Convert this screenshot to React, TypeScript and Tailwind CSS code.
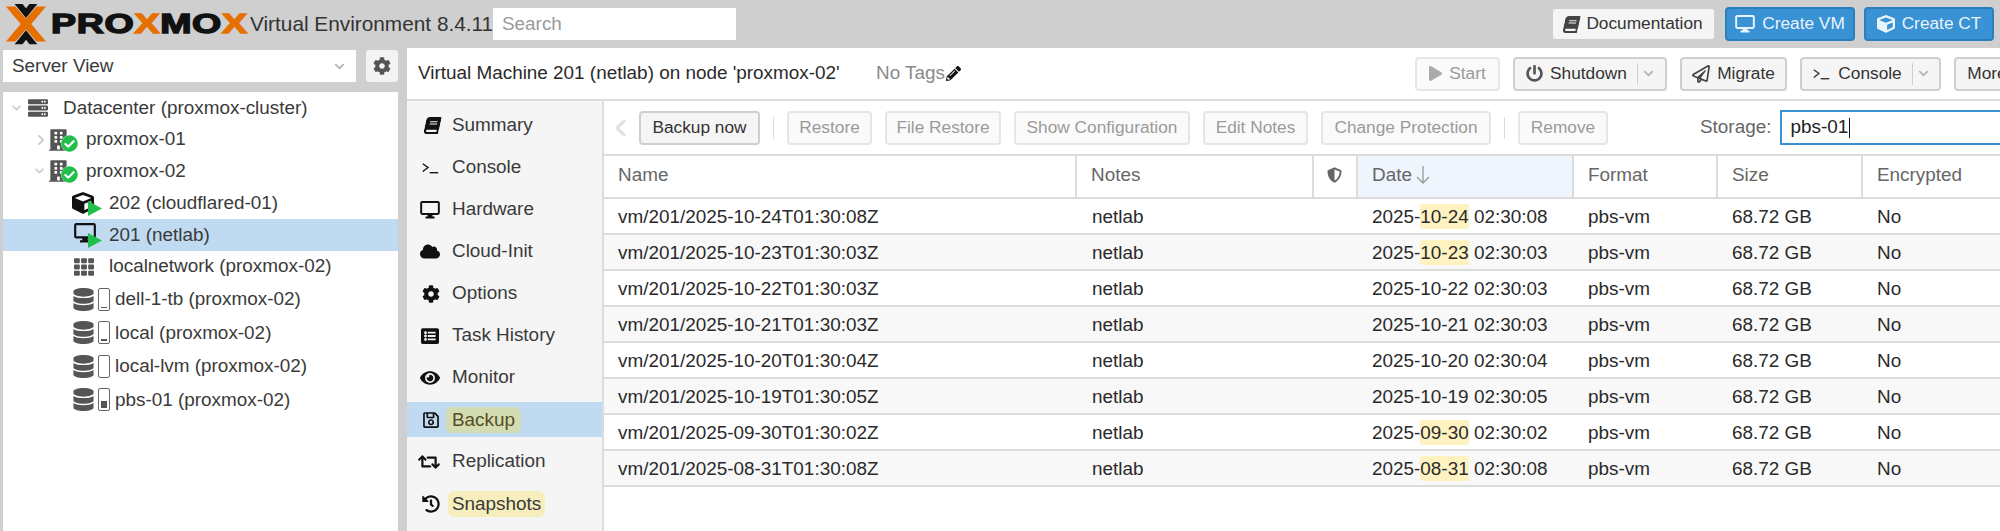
import type { ReactNode } from 'react';
import {
  FaBook,
  FaCheckCircle,
  FaChevronDown,
  FaChevronLeft,
  FaChevronRight,
  FaCloud,
  FaCog,
  FaCube,
  FaDatabase,
  FaEye,
  FaHistory,
  FaListAlt,
  FaPencilAlt,
  FaPlay,
  FaPowerOff,
  FaRegPaperPlane,
  FaRegSave,
  FaRetweet,
  FaServer,
  FaShieldAlt,
  FaTh,
  FaBuilding,
} from 'react-icons/fa';

const TABLE_COLS = 'grid grid-cols-[473px_237px_44px_216px_144px_145px_140px]';

function DesktopIcon({ className }: { className?: string }) {
  return (
    <svg viewBox="0 0 24 22" className={className} fill="currentColor">
      <path
        fillRule="evenodd"
        d="M2.5 0h19A2.5 2.5 0 0 1 24 2.5v12a2.5 2.5 0 0 1-2.5 2.5H15v2h2.5v2.5h-11V19H9v-2H2.5A2.5 2.5 0 0 1 0 14.5v-12A2.5 2.5 0 0 1 2.5 0zM2.4 2.4v12.2h19.2V2.4z"
      />
    </svg>
  );
}

function ConsoleIcon({ className }: { className?: string }) {
  return (
    <svg viewBox="0 0 20 14" className={className} fill="none" stroke="currentColor" strokeWidth="1.6">
      <path d="M1 2l6 4.5L1 11" />
      <path d="M9 12.5h10" />
    </svg>
  );
}

function Btn({
  children,
  w,
  disabled,
  blue,
}: {
  children: ReactNode;
  w: string;
  disabled?: boolean;
  blue?: boolean;
}) {
  const tone = blue
    ? 'bg-[#3892d4] border-[#2c7fbd] text-[#e8f3fb]'
    : disabled
      ? 'bg-[#fafafa] border-[#e6e6e6] text-[#9a9a9a]'
      : 'bg-[#f5f5f5] border-[#cfcfcf] text-[#333]';
  return (
    <div className={`${w} ${tone} flex h-[34px] shrink-0 items-center justify-center gap-[7px] rounded-[4px] border-2 text-[17.3px] whitespace-nowrap`}>
      {children}
    </div>
  );
}

function SplitArrow() {
  return (
    <div className="ml-[3px] flex h-[22px] items-center border-l border-[#cfcfcf] pl-[5px]">
      <FaChevronDown className="h-[11px] w-[11px] text-[#b5b5b5]" />
    </div>
  );
}

function UsageBar({ fill }: { fill: string }) {
  return (
    <div className="relative ml-[4px] h-[23px] w-[12px] rounded-[2px] border border-[#666] bg-white">
      <div className={`absolute right-[2px] bottom-[2px] left-[2px] bg-[#555] ${fill}`} />
    </div>
  );
}

function NodeIcon() {
  return (
    <div className="relative mr-[11px] h-[24px] w-[26px]">
      <FaBuilding className="h-[24px] w-[19px] text-[#555]" />
      <div className="absolute top-[7px] left-[12px] h-[17px] w-[17px] rounded-full bg-white">
        <FaCheckCircle className="h-[17px] w-[17px] text-[#21bf4b]" />
      </div>
    </div>
  );
}

function RunningBadge() {
  return (
    <svg viewBox="0 0 14 15" className="absolute top-[10px] left-[16px] h-[15px] w-[14px]" fill="#21bf4b">
      <path d="M0 0l14 7.5L0 15z" />
    </svg>
  );
}

function TreeRow({ pad, children, text, selected, tall }: { pad: string; children?: ReactNode; text: string; selected?: boolean; tall?: boolean }) {
  return (
    <div className={`flex items-center ${pad} ${tall ? 'h-[33.5px]' : 'h-[31.75px]'} ${selected ? 'bg-[#c0dbf1]' : ''}`}>
      {children}
      <span>{text}</span>
    </div>
  );
}

function StorageRow({ text, fill }: { text: string; fill: string }) {
  return (
    <TreeRow pad="pl-[70px]" text={text} tall>
      <FaDatabase className="h-[23px] w-[21px] text-[#555]" />
      <UsageBar fill={fill} />
      <span className="w-[5px]" />
    </TreeRow>
  );
}

function NavItem({ icon, label, mark }: { icon: ReactNode; label: string; mark?: 'selected' | 'plain' }) {
  return (
    <div className={`flex h-[35px] items-center ${mark === 'selected' ? 'bg-[#c0dbf1]' : ''}`}>
      <div className="flex w-[33px] justify-end text-[#111]">{icon}</div>
      {mark === 'selected' ? (
        <span className="ml-[6px] rounded-[6px] bg-[#d4dcb4] px-[6px] py-px leading-[24px] text-[#554f1e]">{label}</span>
      ) : mark === 'plain' ? (
        <span className="ml-[8px] rounded-[6px] bg-[#f6eebd] px-[4px] py-px leading-[24px]">{label}</span>
      ) : (
        <span className="ml-[12px]">{label}</span>
      )}
    </div>
  );
}

const rows = [
  { name: 'vm/201/2025-10-24T01:30:08Z', date: ['2025-', '10-24', ' 02:30:08'] },
  { name: 'vm/201/2025-10-23T01:30:03Z', date: ['2025-', '10-23', ' 02:30:03'] },
  { name: 'vm/201/2025-10-22T01:30:03Z', date: ['2025-10-22 02:30:03'] },
  { name: 'vm/201/2025-10-21T01:30:03Z', date: ['2025-10-21 02:30:03'] },
  { name: 'vm/201/2025-10-20T01:30:04Z', date: ['2025-10-20 02:30:04'] },
  { name: 'vm/201/2025-10-19T01:30:05Z', date: ['2025-10-19 02:30:05'] },
  { name: 'vm/201/2025-09-30T01:30:02Z', date: ['2025-', '09-30', ' 02:30:02'] },
  { name: 'vm/201/2025-08-31T01:30:08Z', date: ['2025-', '08-31', ' 02:30:08'] },
];

function HeadCell({ children, sorted, last }: { children?: ReactNode; sorted?: boolean; last?: boolean }) {
  return (
    <div className={`flex items-center pb-[3px] pl-[14px] text-[#666] ${last ? '' : 'border-r-2 border-[#dcdcdc]'} ${sorted ? 'bg-[#eef5fc]' : ''}`}>
      {children}
    </div>
  );
}

export default function App() {
  return (
    <div className="flex h-[531px] w-[2000px] flex-col overflow-hidden bg-[#cfcfcf] font-['Liberation_Sans',sans-serif] text-[18.9px] text-[#3a3a3a]">
      {/* top bar */}
      <div className="flex h-[48px] shrink-0 items-center">
        <svg viewBox="0 0 48 48" className="ml-[3px] h-[42px] w-[46px] shrink-0">
          <path d="M1 4h11l12 14L36 4h11L30 24l17 20H36L24 30 12 44H1l17-20z" fill="#e57000" />
          <path d="M11 1h9l4 5 4-5h9L24 17zM11 47h9l4-5 4 5h9L24 31z" fill="#111" />
        </svg>
        <div className="ml-[2px] w-[196px] shrink-0 origin-left scale-x-[1.39] text-[27px] leading-none font-bold tracking-[0.5px] whitespace-nowrap text-[#111] [-webkit-text-stroke:1.4px_#111]">
          PRO<span className="text-[#e57000] [-webkit-text-stroke:1.4px_#e57000]">X</span>MO<span className="text-[#e57000] [-webkit-text-stroke:1.4px_#e57000]">X</span>
        </div>
        <span className="ml-[3px] w-[243px] shrink-0 text-[20.8px] whitespace-nowrap text-[#333]">Virtual Environment 8.4.11</span>
        <div className="flex h-[32px] w-[243px] shrink-0 items-center bg-white pl-[9px] text-[#9a9a9a]">Search</div>
        <div className="ml-auto flex gap-[9px] pr-[6px]">
          <Btn w="w-[165px]">
            <FaBook className="h-[17px] w-[15px] -skew-x-12 text-[#444]" />
            Documentation
          </Btn>
          <Btn w="w-[130px]" blue>
            <DesktopIcon className="h-[18px] w-[20px]" />
            Create VM
          </Btn>
          <Btn w="w-[130px]" blue>
            <FaCube className="h-[18px] w-[18px]" />
            Create CT
          </Btn>
        </div>
      </div>

      <div className="flex min-h-0 flex-1">
        {/* resource tree */}
        <div className="ml-[3px] flex w-[395px] shrink-0 flex-col">
          <div className="mt-[2px] flex h-[32px] gap-[10px]">
            <div className="flex flex-1 items-center justify-between bg-white pr-[11px] pl-[9px]">
              Server View
              <FaChevronDown className="h-[11px] w-[11px] text-[#b5b5b5]" />
            </div>
            <div className="flex w-[32px] items-center justify-center rounded-[3px] bg-[#f3f3f3]">
              <FaCog className="h-[18px] w-[18px] text-[#555]" />
            </div>
          </div>
          <div className="mt-[10px] flex-1 bg-white">
            <TreeRow pad="pl-[7px]" text="Datacenter (proxmox-cluster)">
              <FaChevronDown className="mr-[3px] h-[10px] w-[13px] text-[#ccc]" />
              <FaServer className="mr-[13px] h-[20px] w-[24px] text-[#555]" />
            </TreeRow>
            <TreeRow pad="pl-[33px]" text="proxmox-01">
              <FaChevronRight className="mr-[3px] h-[12px] w-[10px] text-[#ccc]" />
              <NodeIcon />
            </TreeRow>
            <TreeRow pad="pl-[30px]" text="proxmox-02">
              <FaChevronDown className="mr-[3px] h-[10px] w-[13px] text-[#ccc]" />
              <NodeIcon />
            </TreeRow>
            <TreeRow pad="pl-[69px]" text="202 (cloudflared-01)">
              <div className="relative mr-[7px] h-[24px] w-[30px]">
                <FaCube className="mt-[1px] h-[22px] w-[22px] text-[#111]" />
                <RunningBadge />
              </div>
            </TreeRow>
            <TreeRow pad="pl-[69px]" text="201 (netlab)" selected>
              <div className="relative mr-[7px] h-[24px] w-[30px]">
                <DesktopIcon className="h-[20px] w-[26px] text-[#111]" />
                <RunningBadge />
              </div>
            </TreeRow>
            <TreeRow pad="pl-[69px]" text="localnetwork (proxmox-02)">
              <FaTh className="mr-[13px] h-[20px] w-[24px] text-[#555]" />
            </TreeRow>
            <StorageRow text="dell-1-tb (proxmox-02)" fill="h-[1px]" />
            <StorageRow text="local (proxmox-02)" fill="h-[2px]" />
            <StorageRow text="local-lvm (proxmox-02)" fill="h-0" />
            <StorageRow text="pbs-01 (proxmox-02)" fill="h-[7px]" />
          </div>
        </div>

        {/* content panel */}
        <div className="ml-[9px] flex min-w-0 flex-1 flex-col overflow-hidden bg-white">
          <div className="flex h-[53px] shrink-0 items-center border-b-2 border-[#dcdcdc] pl-[11px]">
            <span className="w-[458px] shrink-0 whitespace-nowrap text-[#2a2a2a]">Virtual Machine 201 (netlab) on node &apos;proxmox-02&apos;</span>
            <div className="flex w-[539px] shrink-0 items-center">
              <span className="whitespace-nowrap text-[#8a8a8a]">No Tags</span>
              <FaPencilAlt className="ml-[1px] h-[15px] w-[15px] text-[#111]" />
            </div>
            <div className="flex shrink-0 gap-[13px]">
              <Btn w="w-[85px]" disabled>
                <FaPlay className="h-[15px] w-[13px] text-[#aaa]" />
                Start
              </Btn>
              <Btn w="w-[154px]">
                <FaPowerOff className="h-[17px] w-[17px] text-[#555]" />
                Shutdown
                <SplitArrow />
              </Btn>
              <Btn w="w-[107px]">
                <FaRegPaperPlane className="h-[18px] w-[18px] text-[#444]" />
                Migrate
              </Btn>
              <Btn w="w-[141px]">
                <ConsoleIcon className="h-[12px] w-[19px] text-[#333]" />
                Console
                <SplitArrow />
              </Btn>
              <Btn w="w-[66px]">More</Btn>
            </div>
          </div>

          <div className="flex min-h-0 flex-1">
            <div className="flex w-[195px] shrink-0 flex-col gap-[7px] bg-[#f5f5f5] pt-[7px]">
              <NavItem icon={<FaBook className="h-[17px] w-[15px] -skew-x-12" />} label="Summary" />
              <NavItem icon={<ConsoleIcon className="h-[12px] w-[19px]" />} label="Console" />
              <NavItem icon={<DesktopIcon className="h-[18px] w-[20px]" />} label="Hardware" />
              <NavItem icon={<FaCloud className="h-[17px] w-[20px]" />} label="Cloud-Init" />
              <NavItem icon={<FaCog className="h-[18px] w-[18px]" />} label="Options" />
              <NavItem icon={<FaListAlt className="h-[18px] w-[20px]" />} label="Task History" />
              <NavItem icon={<FaEye className="h-[18px] w-[20px]" />} label="Monitor" />
              <NavItem icon={<FaRegSave className="h-[18px] w-[18px]" />} label="Backup" mark="selected" />
              <NavItem icon={<FaRetweet className="h-[18px] w-[22px]" />} label="Replication" />
              <NavItem icon={<FaHistory className="h-[18px] w-[18px]" />} label="Snapshots" mark="plain" />
            </div>

            <div className="min-w-0 flex-1 border-l-2 border-[#dcdcdc]">
              <div className="flex h-[53px] items-center">
                <FaChevronLeft className="ml-[10px] h-[22px] w-[13px] shrink-0 text-[#e2e2e2]" />
                <div className="ml-[12px] flex shrink-0 items-center gap-[13px]">
                  <Btn w="w-[121px]">Backup now</Btn>
                  <div className="h-[22px] w-px bg-[#dcdcdc]" />
                  <Btn w="w-[85px]" disabled>Restore</Btn>
                  <Btn w="w-[116px]" disabled>File Restore</Btn>
                  <Btn w="w-[176px]" disabled>Show Configuration</Btn>
                  <Btn w="w-[105px]" disabled>Edit Notes</Btn>
                  <Btn w="w-[170px]" disabled>Change Protection</Btn>
                  <div className="h-[22px] w-px bg-[#dcdcdc]" />
                  <Btn w="w-[90px]" disabled>Remove</Btn>
                </div>
                <span className="ml-[92px] shrink-0 text-[#666]">Storage:</span>
                <div className="ml-[9px] flex h-[35px] w-[240px] shrink-0 items-center border-2 border-[#3892d4] bg-white pl-[8px] text-[#222]">
                  pbs-01
                  <span className="ml-px h-[20px] w-px bg-[#111]" />
                </div>
              </div>

              <div className={`${TABLE_COLS} h-[45px] border-y-2 border-[#dcdcdc]`}>
                <HeadCell>Name</HeadCell>
                <HeadCell>Notes</HeadCell>
                <HeadCell>
                  <FaShieldAlt className="ml-[-1px] h-[16px] w-[15px] text-[#666]" />
                </HeadCell>
                <HeadCell sorted>
                  Date
                  <svg viewBox="0 0 14 20" className="ml-[4px] h-[20px] w-[14px]" fill="none" stroke="#999" strokeWidth="1.3">
                    <path d="M7 1v17M1 12l6 6 6-6" />
                  </svg>
                </HeadCell>
                <HeadCell>Format</HeadCell>
                <HeadCell>Size</HeadCell>
                <HeadCell last>Encrypted</HeadCell>
              </div>

              {rows.map((row, i) => (
                <div key={row.name} className={`${TABLE_COLS} h-[36px] items-center border-b-2 border-[#dcdcdc] pt-[2px] text-[#2a2a2a] ${i % 2 ? 'bg-[#f8f8f8]' : 'bg-white'}`}>
                  <div className="pl-[14px]">{row.name}</div>
                  <div className="pl-[15px]">netlab</div>
                  <div />
                  <div className="pl-[14px] whitespace-pre">
                    {row.date.length === 3 ? (
                      <>
                        {row.date[0]}
                        <span className="rounded-[3px] bg-[#fdf2c0] py-[2px]">{row.date[1]}</span>
                        {row.date[2]}
                      </>
                    ) : (
                      row.date[0]
                    )}
                  </div>
                  <div className="pl-[14px]">pbs-vm</div>
                  <div className="pl-[14px]">68.72 GB</div>
                  <div className="pl-[14px]">No</div>
                </div>
              ))}
            </div>
          </div>
        </div>
      </div>
    </div>
  );
}
